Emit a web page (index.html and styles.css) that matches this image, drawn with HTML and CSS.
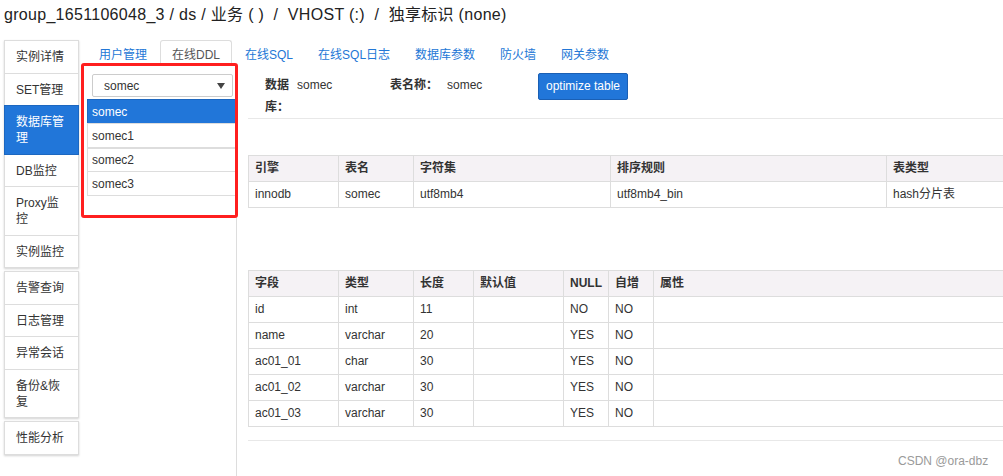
FILE: index.html
```html
<!DOCTYPE html>
<html lang="zh-CN">
<head>
<meta charset="utf-8">
<title>DDL</title>
<link rel="stylesheet" href="styles.css">
</head>
<body>
<div class="page">
  <h1 class="title">group_1651106048_3 / ds / 业务 ( ) &nbsp;/ &nbsp;VHOST (:) &nbsp;/ &nbsp;独享标识 (none)</h1>
  <div class="main">
    <nav class="sidebar">
      <ul class="side-group">
        <li class="side-item">实例详情</li>
        <li class="side-item">SET管理</li>
        <li class="side-item active">数据库管理</li>
        <li class="side-item">DB监控</li>
        <li class="side-item">Proxy监控</li>
        <li class="side-item">实例监控</li>
      </ul>
      <ul class="side-group">
        <li class="side-item">告警查询</li>
        <li class="side-item">日志管理</li>
        <li class="side-item">异常会话</li>
        <li class="side-item">备份&amp;恢复</li>
      </ul>
      <ul class="side-group">
        <li class="side-item">性能分析</li>
      </ul>
    </nav>
    <section class="content">
      <ul class="tabs">
        <li class="tab">用户管理</li>
        <li class="tab active">在线DDL</li>
        <li class="tab">在线SQL</li>
        <li class="tab">在线SQL日志</li>
        <li class="tab">数据库参数</li>
        <li class="tab">防火墙</li>
        <li class="tab">网关参数</li>
      </ul>
      <div class="tab-body">
        <aside class="db-panel">
          <div class="select"><span>somec</span><span class="caret"></span></div>
          <ul class="db-list">
            <li class="db-item active">somec</li>
            <li class="db-item">somec1</li>
            <li class="db-item thick">somec2</li>
            <li class="db-item">somec3</li>
          </ul>
        </aside>
        <div class="detail">
          <div class="info">
            <div class="field field-db">
              <span class="label label-db">数据库：</span>
              <span class="value">somec</span>
            </div>
            <div class="field field-tb">
              <span class="label">表名称：</span>
              <span class="value value-tb">somec</span>
            </div>
            <button class="btn">optimize table</button>
          </div>
          <table class="grid grid-top">
            <colgroup><col class="w90"><col class="w75"><col class="w197"><col class="w276"><col></colgroup>
            <thead>
              <tr><th>引擎</th><th>表名</th><th>字符集</th><th>排序规则</th><th>表类型</th></tr>
            </thead>
            <tbody>
              <tr><td>innodb</td><td>somec</td><td>utf8mb4</td><td>utf8mb4_bin</td><td>hash分片表</td></tr>
            </tbody>
          </table>
          <table class="grid grid-cols">
            <colgroup><col class="w90"><col class="w75"><col class="w60"><col class="w90"><col class="w45"><col class="w45"><col></colgroup>
            <thead>
              <tr><th>字段</th><th>类型</th><th>长度</th><th>默认值</th><th>NULL</th><th>自增</th><th>属性</th></tr>
            </thead>
            <tbody>
              <tr><td>id</td><td>int</td><td>11</td><td></td><td>NO</td><td>NO</td><td></td></tr>
              <tr><td>name</td><td>varchar</td><td>20</td><td></td><td>YES</td><td>NO</td><td></td></tr>
              <tr><td>ac01_01</td><td>char</td><td>30</td><td></td><td>YES</td><td>NO</td><td></td></tr>
              <tr><td>ac01_02</td><td>varchar</td><td>30</td><td></td><td>YES</td><td>NO</td><td></td></tr>
              <tr><td>ac01_03</td><td>varchar</td><td>30</td><td></td><td>YES</td><td>NO</td><td></td></tr>
            </tbody>
          </table>
          <div class="sep"></div>
        </div>
      </div>
    </section>
  </div>
  <div class="annot"></div>
  <div class="watermark">CSDN @ora-dbz</div>
</div>
</body>
</html>
```
FILE: styles.css
```css
html, body {
  margin: 0;
  padding: 0;
  overflow: hidden;
  background: #fff;
}
body {
  font: 12px/1.5 "Liberation Sans", "Noto Sans CJK SC", sans-serif;
  color: #333;
}
.page {
  position: relative;
  width: 1003px;
  height: 476px;
  overflow: hidden;
}
.title {
  margin: 0;
  height: 40px;
  box-sizing: border-box;
  padding: 5px 4px 0;
  font-size: 16px;
  line-height: 20px;
  letter-spacing: 0.3px;
  font-weight: normal;
  color: #222;
  white-space: nowrap;
}
.main {
  display: flex;
  padding-left: 4px;
  height: 436px;
}
.sidebar {
  width: 75px;
  flex: none;
}
.side-group {
  list-style: none;
  margin: 0 0 3px;
  padding: 0;
  box-shadow: 0 1px 2px rgba(0, 0, 0, 0.18);
}
.side-item {
  border: 1px solid #ddd;
  margin-top: -1px;
  padding: 8px 10px 7.5px 11px;
  line-height: 16px;
  background: #fff;
  color: #333;
}
.side-item:first-child {
  margin-top: 0;
}
.side-item.active {
  background: #2176d9;
  border-color: #1c67c0;
  color: #fff;
  position: relative;
}
.content {
  margin-left: 8px;
  flex: 1;
  min-width: 0;
  display: flex;
  flex-direction: column;
}
.tabs {
  display: flex;
  list-style: none;
  margin: 0;
  padding: 0;
  height: 26px;
  flex: none;
}
.tab {
  padding: 6px 11px 0;
  line-height: 17px;
  border: 1px solid transparent;
  border-bottom: 0;
  border-radius: 3px 3px 0 0;
  margin-right: 1px;
  color: #2377d6;
  white-space: nowrap;
}
.tab.active {
  border-color: #ddd;
  color: #555;
  background: #fff;
}
.tab-body {
  display: flex;
  flex: 1;
}
.db-panel {
  width: 149px;
  flex: none;
  border-right: 1px solid #ddd;
  padding-top: 8px;
}
.select {
  display: flex;
  align-items: center;
  margin: 0 3px 0 5px;
  height: 23px;
  box-sizing: border-box;
  border: 1px solid #ccc;
  border-radius: 2px;
  padding: 0 7px 0 11px;
  color: #333;
}
.caret {
  margin-left: auto;
  width: 0;
  height: 0;
  border-left: 4px solid transparent;
  border-right: 4px solid transparent;
  border-top: 6px solid #444;
}
.db-list {
  list-style: none;
  margin: 2px 0 0;
  padding: 0;
}
.db-item {
  border: 1px solid #ddd;
  border-right: 0;
  margin-top: -1px;
  padding: 1px 4px 0;
  line-height: 22px;
  color: #333;
}
.db-item:first-child {
  margin-top: 0;
}
.db-item.thick {
  border-top: 2px solid #ddd;
  padding-top: 0;
}
.db-item.active {
  background: #2176d9;
  border-color: #1c67c0;
  color: #fff;
}
.detail {
  margin-left: 11px;
  flex: 1;
  min-width: 0;
}
.info {
  display: flex;
  align-items: flex-start;
  height: 53px;
  box-sizing: border-box;
  padding: 7px 0 0 17px;
  border-bottom: 1px solid #e8e8e8;
}
.field {
  display: flex;
  line-height: 22px;
  padding-top: 1px;
}
.field-db {
  width: 125px;
}
.field-tb {
  width: 148px;
}
.label {
  font-weight: bold;
  color: #333;
}
.label-db {
  width: 26px;
  margin-right: 6px;
}
.value-tb {
  margin-left: 9px;
}
.btn {
  font: inherit;
  height: 27px;
  padding: 0 7px;
  border: 1px solid #1a5fb4;
  border-radius: 2px;
  background: #2176d9;
  color: #fff;
  line-height: 25px;
}
.grid {
  width: 820px;
  table-layout: fixed;
  border-collapse: collapse;
}
.grid th, .grid td {
  border: 1px solid #ddd;
  padding: 0 6px;
  height: 25px;
  line-height: 25px;
  text-align: left;
  white-space: nowrap;
  overflow: hidden;
}
.grid th {
  background: #f5f2f5;
  font-weight: bold;
  color: #333;
}
.grid-top {
  margin-top: 36px;
}
.grid-cols {
  margin-top: 62px;
}
.w90 { width: 90px; }
.w75 { width: 75px; }
.w60 { width: 60px; }
.w45 { width: 45px; }
.w197 { width: 197px; }
.w276 { width: 276px; }
.sep {
  margin-top: 13px;
  border-top: 1px solid #e8e8e8;
}
.annot {
  position: absolute;
  left: 81px;
  top: 63px;
  width: 157px;
  height: 155px;
  box-sizing: border-box;
  border: 3px solid #ff1f1f;
  border-radius: 3px;
}
.watermark {
  position: absolute;
  left: 898px;
  top: 453px;
  font-size: 12px;
  line-height: 16px;
  color: #9a9a9a;
}
```
